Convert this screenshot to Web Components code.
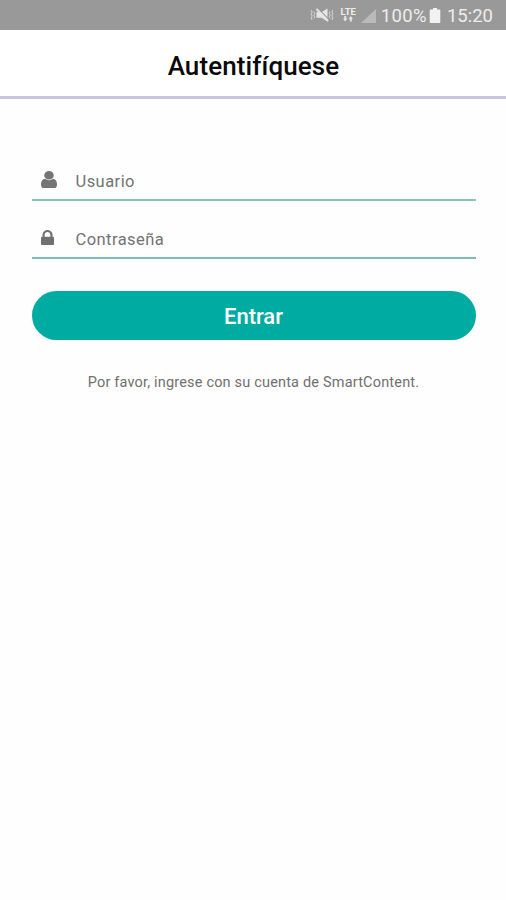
<!DOCTYPE html>
<html lang="es">
<head>
<meta charset="UTF-8">
<meta name="viewport" content="width=device-width, initial-scale=1">
<title>Autentifíquese</title>
<style>
  body {
    margin: 0;
    background: #fefefe;
    font-family: Roboto, "Liberation Sans", sans-serif;
  }
</style>
</head>
<body>
<login-page></login-page>

<script>
/**
 * StatusBar - Barra de estado del teléfono
 */
class StatusBar extends HTMLElement {
  constructor() {
    super();
    this.attachShadow({ mode: 'open' });
  }

  connectedCallback() {
    const battery = this.getAttribute('battery') || '100%';
    const time = this.getAttribute('time') || '00:00';

    this.shadowRoot.innerHTML = `
      <style>
        :host {
          display: flex;
          align-items: center;
          justify-content: flex-end;
          box-sizing: border-box;
          height: 30px;
          padding: 1px 13px 0 0;
          background: #999;
          color: #ededed;
          font-size: 18.5px;
          line-height: 30px;
        }

        svg {
          display: block;
          flex: none;
        }

        .mute { margin-top: -2px; }

        .lte {
          display: flex;
          flex-direction: column;
          align-items: center;
          width: 17px;
          margin: -3px 4px 0 6px;
          font-size: 9.5px;
          font-weight: bold;
          line-height: 9px;
        }

        .signal { margin-right: 5px; }
        .battery { margin: 0 6px 0 2px; }
        .percent { letter-spacing: 0.35px; }
      </style>

      <svg class="mute" width="24" height="14" viewBox="0 0 24 14" fill="none" stroke="#e6e6e6">
        <path d="M1 2l1.200 2L1 6l1.200 2L1 10l1.200 2M3.800 3.500l1 1.700-1 1.800 1 1.800-1 1.700M23 2l-1.200 2L23 6l-1.200 2 1.200 2-1.200 2M20.200 3.500l-1 1.700 1 1.800-1 1.800 1 1.700" stroke-width=".8"/>
        <path d="M6.500 4.200h5l6-3.700v13l-6-3.700h-5z" fill="#e6e6e6" stroke="none"/>
        <path d="M8.300 .8l10.500 10.500" stroke="#999" stroke-width="1.200"/>
        <path d="M6.500 1l11.500 12" stroke-width="2"/>
      </svg>
      <span class="lte">LTE
        <svg width="10" height="6" viewBox="0 0 10 6" fill="#e6e6e6">
          <path d="M0 2.500h1.200V0h2v2.500h1.200L2.200 5.500zM5.600 3L7.800 0 10 3H8.800v2.500h-2V3z"/>
        </svg>
      </span>
      <svg class="signal" width="15" height="14" viewBox="0 0 15 14"><path d="M15 0v14H0z" fill="#bababa"/></svg>
      <span class="percent">${battery}</span>
      <svg class="battery" width="12" height="15" viewBox="0 0 12 15"><path d="M4 0h4v1.500h2.500q.8 0 .8.8v11.900q0 .8-.8.8h-9q-.8 0-.8-.8V2.300q0-.8.800-.8H4z" fill="#f2f2f2"/></svg>
      <span class="time">${time}</span>
    `;
  }
}

/**
 * PageHeader - Título de la pantalla
 */
class PageHeader extends HTMLElement {
  constructor() {
    super();
    this.attachShadow({ mode: 'open' });
    this.shadowRoot.innerHTML = `
      <style>
        :host {
          display: block;
          box-sizing: border-box;
          height: 69px;
          padding-top: 1px;
          border-bottom: 3px solid #c9c3e2;
          background: #fff;
        }

        h1 {
          margin: 0;
          padding-left: 1px;
          color: #0a0a0a;
          font-size: 26px;
          font-weight: 500;
          letter-spacing: 0.1px;
          line-height: 70px;
          text-align: center;
        }
      </style>
      <h1><slot></slot></h1>
    `;
  }
}

/**
 * InputField - Campo con icono y línea inferior
 */
class InputField extends HTMLElement {
  constructor() {
    super();
    this.attachShadow({ mode: 'open' });
    this.shadowRoot.innerHTML = `
      <style>
        :host {
          display: grid;
          grid-template-columns: 44px 1fr;
          align-items: center;
          box-sizing: border-box;
          height: 39px;
          border-bottom: 2px solid var(--line, #84c5b4);
          color: #737373;
          font-size: 16.5px;
          letter-spacing: 0.45px;
        }

        .icon {
          padding: 0 0 3px 9px;
        }

        .label {
          padding-top: 2px;
        }

        ::slotted(svg) {
          display: block;
        }
      </style>
      <div class="icon"><slot name="icon"></slot></div>
      <div class="label"><slot></slot></div>
    `;
  }
}

/**
 * PillButton - Botón principal
 */
class PillButton extends HTMLElement {
  constructor() {
    super();
    this.attachShadow({ mode: 'open' });
    this.shadowRoot.innerHTML = `
      <style>
        :host {
          display: block;
        }

        button {
          display: block;
          width: 100%;
          height: 49px;
          padding: 2px 0 0;
          border: none;
          border-radius: 25px;
          background: #00aca1;
          color: #fff;
          font-family: inherit;
          font-size: 22px;
          font-weight: 500;
          cursor: pointer;
        }
      </style>
      <button><slot></slot></button>
    `;
  }
}

/**
 * LoginPage - Pantalla completa de acceso
 */
class LoginPage extends HTMLElement {
  constructor() {
    super();
    this.attachShadow({ mode: 'open' });
    this.shadowRoot.innerHTML = `
      <style>
        :host {
          display: block;
          height: 900px;
        }

        main {
          display: flex;
          flex-direction: column;
          padding: 63px 30.5px 0 31.5px;
        }

        .password {
          --line: #7dbdb4;
          margin-top: 19px;
        }

        pill-button {
          margin-top: 32px;
        }

        p {
          margin: 33px 0 0;
          color: #707070;
          font-size: 14.5px;
          line-height: 20px;
          letter-spacing: 0.18px;
          text-align: center;
          white-space: nowrap;
        }
      </style>

      <status-bar battery="100%" time="15:20"></status-bar>
      <page-header>Autentifíquese</page-header>
      <main>
        <input-field>
          <svg slot="icon" width="16" height="17" viewBox="0 0 1280 1536" preserveAspectRatio="none" fill="#757575">
            <path d="M1280 1271q0 109-62.500 187t-150.500 78h-854q-88 0-150.500-78t-62.500-187q0-85 8.500-160.500t31.500-152 58.500-131 94-89 134.500-34.500q131 128 313 128t313-128q76 0 134.500 34.500t94 89 58.500 131 31.500 152 8.500 160.500zm-256-887q0 159-112.500 271.500t-271.500 112.500-271.500-112.500-112.500-271.500 112.500-271.500 271.500-112.500 271.500 112.500 112.500 271.500z"/>
          </svg>
          Usuario
        </input-field>
        <input-field class="password">
          <svg slot="icon" width="13" height="15" viewBox="0 0 1152 1408" preserveAspectRatio="none" fill="#707070">
            <path d="M320 640h512v-192q0-106-75-181t-181-75-181 75-75 181v192zm832 96v576q0 40-28 68t-68 28h-960q-40 0-68-28t-28-68v-576q0-40 28-68t68-28h32v-192q0-184 132-316t316-132 316 132 132 316v192h32q40 0 68 28t28 68z"/>
          </svg>
          Contraseña
        </input-field>
        <pill-button>Entrar</pill-button>
        <p>Por favor, ingrese con su cuenta de SmartContent.</p>
      </main>
    `;
  }
}

// Registrar los Web Components
customElements.define('status-bar', StatusBar);
customElements.define('page-header', PageHeader);
customElements.define('input-field', InputField);
customElements.define('pill-button', PillButton);
customElements.define('login-page', LoginPage);
</script>
</body>
</html>
